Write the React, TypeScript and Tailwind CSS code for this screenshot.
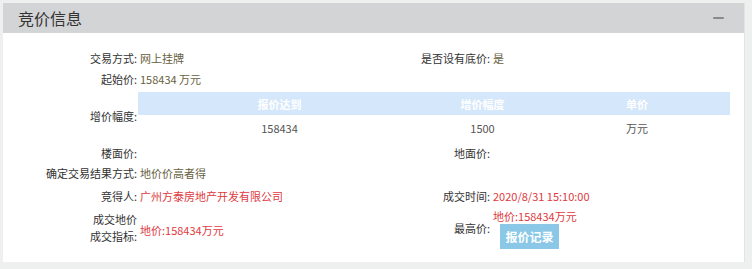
import React from "react";

const font = { fontFamily: '"Noto Sans CJK SC", "Noto Sans", sans-serif' };

function Label({ children, w = "w-[134px]" }: { children: React.ReactNode; w?: string }) {
  return <div className={`${w} shrink-0 text-right text-[#333]`}>{children}</div>;
}

export default function App() {
  return (
    <div
      style={font}
      className="w-[752px] h-[269px] bg-[#eef0f0] pt-[3px] pl-[3px] pr-[7px] pb-[7px] text-[11px] leading-[16px]"
    >
      <div className="bg-white h-full flex flex-col border-r border-[#e2e4e4]">
        <div className="h-[30px] bg-[#d3d4d6] flex items-center justify-between pl-[15px] pr-[20px]">
          <span className="text-[16px] text-[#333] leading-[20px]">竞价信息</span>
          <span className="block w-[11px] h-[2px] rounded-full bg-[#8a8a8a]" />
        </div>

        <div className="flex flex-col pt-[14px]">
          <div className="flex h-[21px] items-center">
            <div className="w-[355px] flex">
              <Label>交易方式:</Label>
              <span className="ml-[3px] text-[#66603e]">网上挂牌</span>
            </div>
            <div className="flex">
              <Label w="w-[132px]">是否设有底价:</Label>
              <span className="ml-[3px] text-[#66603e]">是</span>
            </div>
          </div>
          <div className="flex h-[21px] items-center">
            <Label>起始价:</Label>
            <span className="ml-[3px] text-[#66603e]">158434 万元</span>
          </div>
          <div className="flex mt-[3px] items-center">
            <Label>增价幅度:</Label>
            <div className="ml-[1px] w-[592px] flex flex-col">
              <div className="h-[23px] bg-[#d5e7fa] flex items-center text-white font-bold">
                <div className="w-[283px] text-center">报价达到</div>
                <div className="w-[123px] text-center">增价幅度</div>
                <div className="w-[186px] text-center">单价</div>
              </div>
              <div className="h-[25px] flex items-center text-[#555]">
                <div className="w-[283px] text-center">158434</div>
                <div className="w-[123px] text-center">1500</div>
                <div className="w-[186px] text-center">万元</div>
              </div>
            </div>
          </div>
          <div className="flex h-[20px] mt-[3px] items-center">
            <div className="w-[355px] flex">
              <Label>楼面价:</Label>
            </div>
            <Label w="w-[132px]">地面价:</Label>
          </div>
          <div className="flex h-[20px] items-center">
            <Label>确定交易结果方式:</Label>
            <span className="ml-[3px] text-[#66603e]">地价价高者得</span>
          </div>
          <div className="flex h-[20px] mt-[3px] items-center">
            <div className="w-[355px] flex">
              <Label>竞得人:</Label>
              <span className="ml-[3px] text-[#e0393e]">广州方泰房地产开发有限公司</span>
            </div>
            <div className="flex">
              <Label w="w-[132px]">成交时间:</Label>
              <span className="ml-[3px] text-[#e0393e]">2020/8/31 15:10:00</span>
            </div>
          </div>
          <div className="flex">
            <div className="w-[355px] flex items-center mt-[5px] h-[34px]">
              <div className="w-[134px] shrink-0 text-right text-[#333] leading-[17px]">
                成交地价
                <br />
                成交指标:
              </div>
              <span className="ml-[3px] mt-[3px] text-[#e0393e]">地价:158434万元</span>
            </div>
            <div className="flex">
              <Label w="w-[132px] mt-[14px]">最高价:</Label>
              <div className="ml-[3px] mt-[2px] flex flex-col items-start">
                <span className="text-[#e0393e]">地价:158434万元</span>
                <button className="ml-[7px] w-[59px] h-[25px] bg-[#8bc8e7] text-white font-bold text-[12px] flex items-center justify-center">
                  报价记录
                </button>
              </div>
            </div>
          </div>
        </div>
      </div>
    </div>
  );
}
